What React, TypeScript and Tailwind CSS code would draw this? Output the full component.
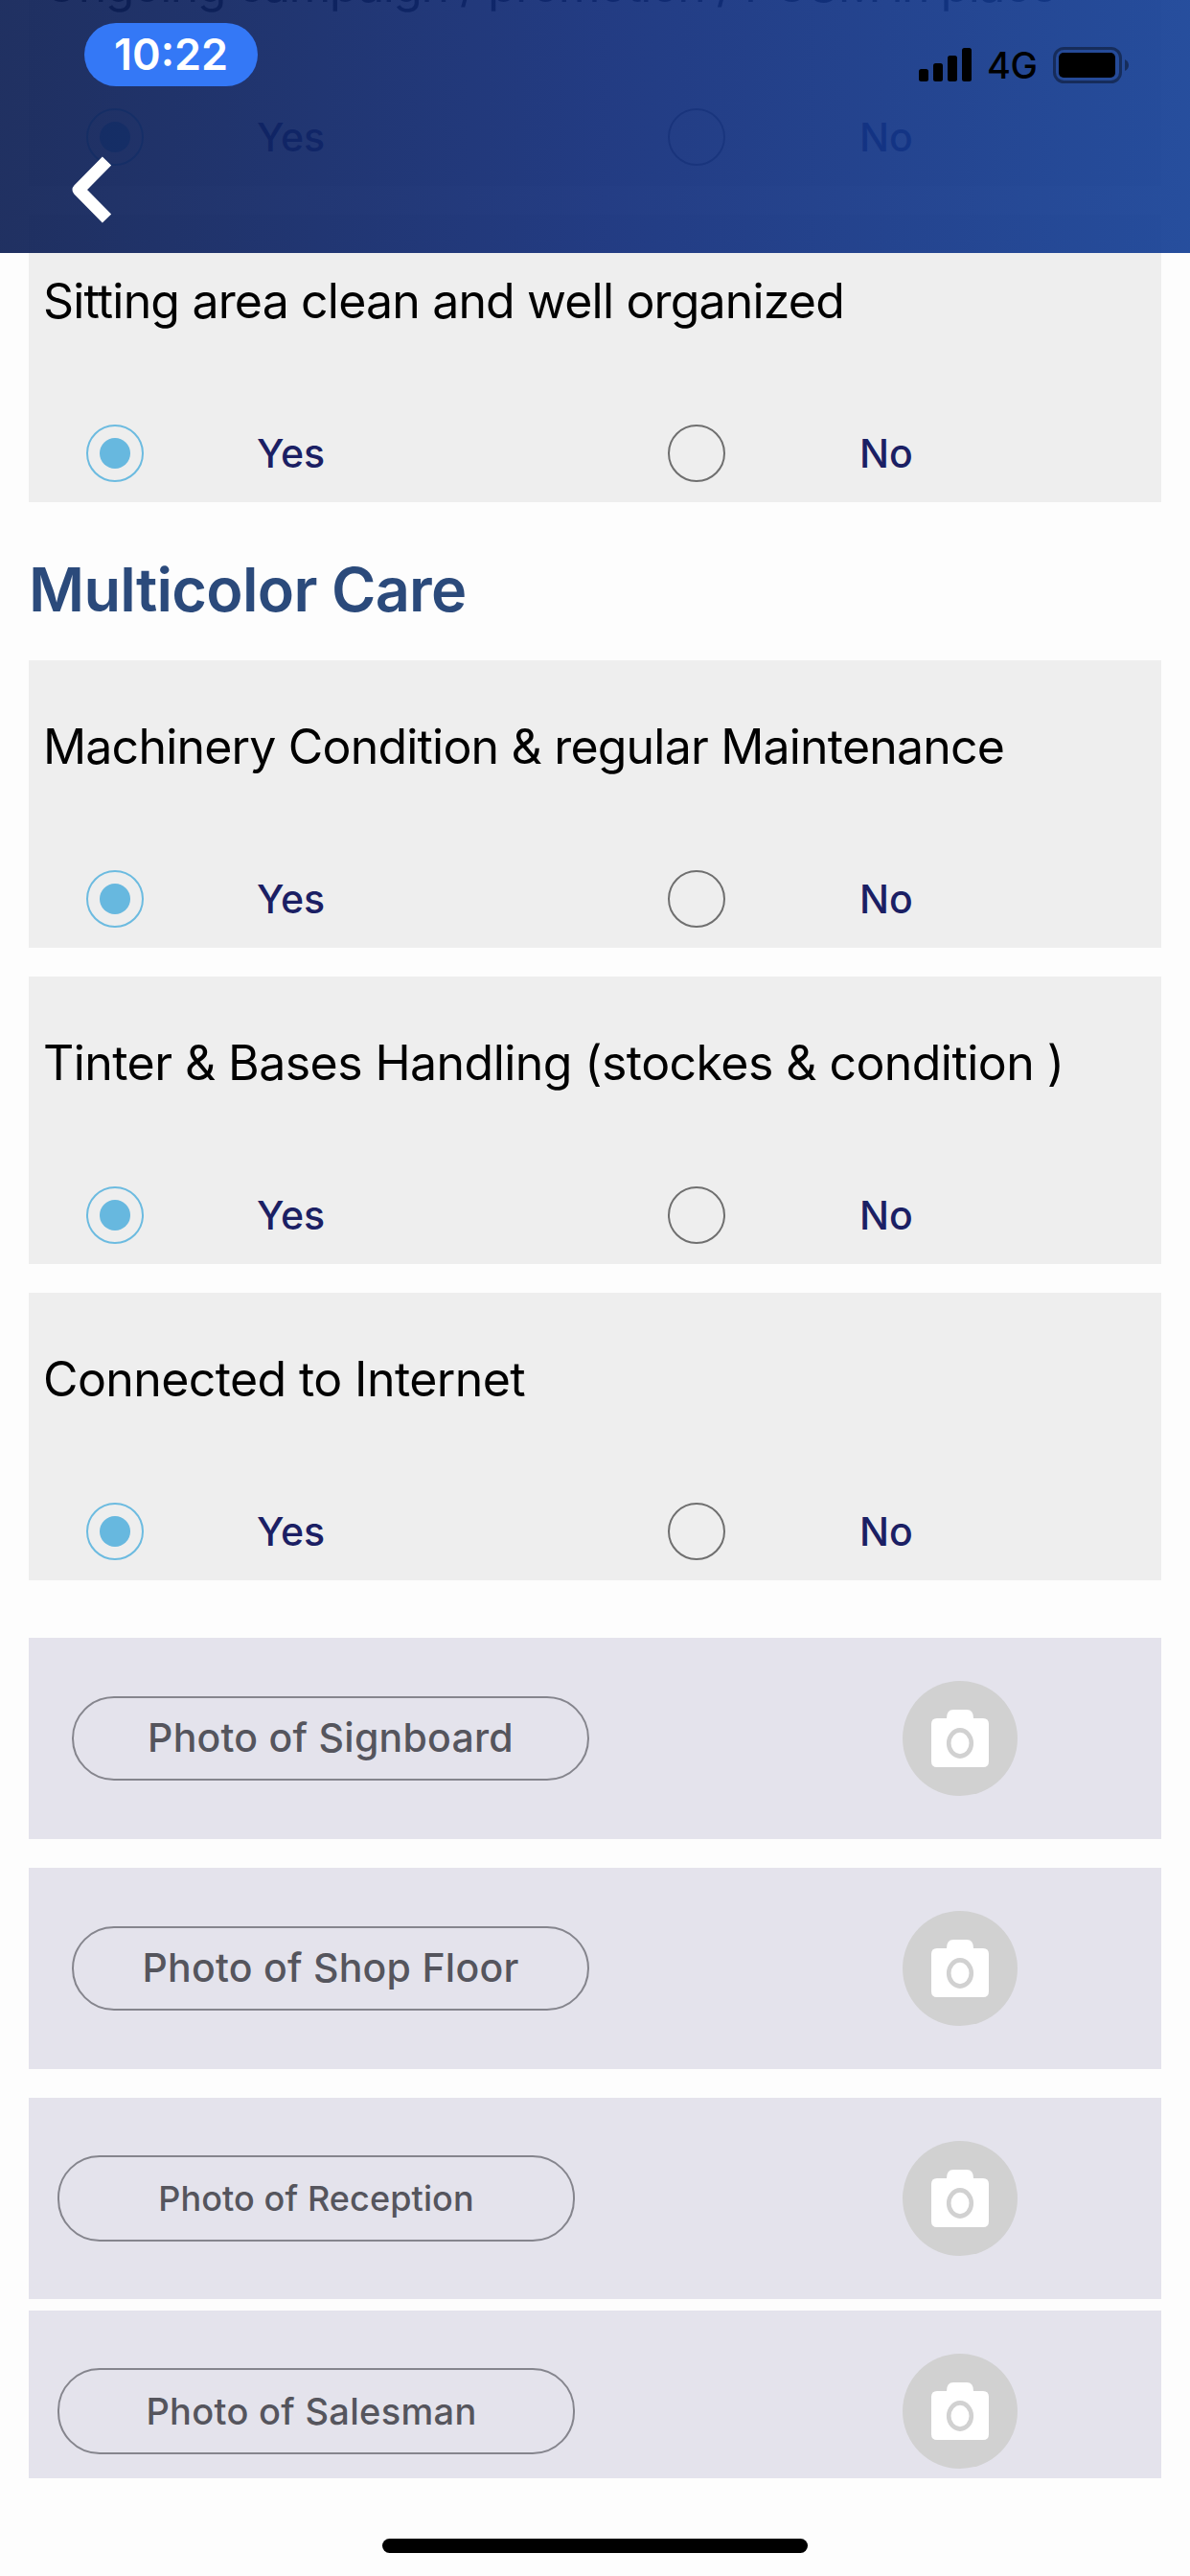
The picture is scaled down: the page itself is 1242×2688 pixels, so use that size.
type Question = { text: string; tracking: string };

const sitting: Question[] = [
  { text: 'Ongoing campaign / promotion / POSM in place', tracking: 'tracking-[-1.55px]' },
  { text: 'Sitting area clean and well organized', tracking: 'tracking-[-0.83px]' },
];

const care: Question[] = [
  { text: 'Machinery Condition & regular Maintenance', tracking: 'tracking-[-0.81px]' },
  { text: 'Tinter & Bases Handling (stockes & condition )', tracking: 'tracking-[-0.56px]' },
  { text: 'Connected to Internet', tracking: 'tracking-[-0.6px]' },
];

function Radio({ checked }: { checked?: boolean }) {
  return checked ? (
    <span className="flex size-[60px] shrink-0 items-center justify-center rounded-full border-2 border-[#6cbbe0]">
      <span className="size-[32px] rounded-full bg-[#67b8df]" />
    </span>
  ) : (
    <span className="size-[60px] shrink-0 rounded-full border-2 border-[#6f6f6f]" />
  );
}

function QuestionCard({ text, tracking }: Question) {
  return (
    <section className="h-[300px] bg-[#eeeeee] pt-[60px]">
      <h3 className={`pl-[15px] text-[50px] leading-[61px] whitespace-nowrap text-black ${tracking}`}>{text}</h3>
      <div className="mt-[98px] flex h-[60px] items-center pl-[60px] text-[41px] leading-[60px] font-[450] text-[#1b1f64]">
        <Radio checked />
        <span className="ml-[118px] w-[429px]">Yes</span>
        <Radio />
        <span className="ml-[140px]">No</span>
      </div>
    </section>
  );
}

function CameraButton() {
  return (
    <svg className="mt-[45px] ml-auto mr-[150px] size-[120px]" viewBox="0 0 120 120">
      <circle cx="60" cy="60" r="60" fill="#d1d1d1" />
      <path
        d="M36 39h10q0-9 7-9h14q7 0 7 9h10q6 0 6 6v39q0 6-6 6H36q-6 0-6-6V45q0-6 6-6z"
        fill="#ffffff"
      />
      <ellipse cx="60" cy="65" rx="11.8" ry="13.6" fill="none" stroke="#d1d1d1" strokeWidth="4.6" />
    </svg>
  );
}

function PhotoCard({ label, card, pill }: { label: string; card: string; pill: string }) {
  return (
    <section className={`flex items-start bg-[#e4e3ec] ${card}`}>
      <div
        className={`flex w-[540px] items-center justify-center rounded-[44px] border-2 border-[#85858d] font-medium whitespace-nowrap text-[#55555d] ${pill}`}
      >
        {label}
      </div>
      <CameraButton />
    </section>
  );
}

function Header() {
  return (
    <header className="absolute inset-x-0 top-0 h-[264px] bg-linear-to-r from-[#0d1f54]/92 via-[#112c79]/92 to-[#143f95]/92">
      <div className="flex h-[90px] items-start justify-between pt-6 pr-[63px] pl-[88px]">
        <div className="flex h-[66px] w-[181px] items-center justify-center rounded-full bg-[#3478f6] text-[45px] font-semibold text-white">
          10:22
        </div>
        <div className="mt-[25px] flex h-[38px] items-center text-black">
          <svg className="h-[38px] w-[56px]" viewBox="0 0 56 38">
            <rect x="0" y="23" width="10" height="13" rx="2.5" />
            <rect x="15" y="17" width="10" height="19" rx="2.5" />
            <rect x="30" y="9" width="10" height="27" rx="2.5" />
            <rect x="45" y="1" width="10" height="35" rx="2.5" />
          </svg>
          <span className="ml-[15px] w-[69px] text-[38px] leading-[38px] font-medium tracking-[-0.5px]">4G</span>
          <svg className="h-[38px] w-[80px]" viewBox="0 0 80 38">
            <rect x="1.5" y="1.5" width="69" height="35" rx="10" fill="none" stroke="#000" strokeOpacity="0.4" strokeWidth="3" />
            <rect x="6" y="6" width="59" height="26" rx="5" />
            <path d="M75 13q4 2 4 6t-4 6z" fillOpacity="0.4" />
          </svg>
        </div>
      </div>
      <svg className="mt-[72px] ml-[73px] h-[72px] w-[48px]" viewBox="0 0 48 72">
        <path d="M38.500 6L9 36l29.500 30" fill="none" stroke="#fff" strokeWidth="13" strokeLinejoin="round" />
      </svg>
    </header>
  );
}

export default function App() {
  return (
    <div className="relative flex h-[2688px] w-[1242px] flex-col overflow-hidden bg-[#fdfdfd] font-['Inter',sans-serif]">
      <main className="-mt-[106px] flex shrink-0 flex-col px-[30px]">
        <div className="flex flex-col gap-[30px]">
          {sitting.map((q) => (
            <QuestionCard key={q.text} {...q} />
          ))}
        </div>
        <h2 className="mt-[51px] h-[80px] text-[63px] leading-[80px] font-semibold tracking-[-0.7px] text-[#2b4a7b]">Multicolor Care</h2>
        <div className="mt-[34px] flex flex-col gap-[30px]">
          {care.map((q) => (
            <QuestionCard key={q.text} {...q} />
          ))}
        </div>
        <div className="mt-[60px] flex flex-col">
          <PhotoCard label="Photo of Signboard" card="h-[210px]" pill="ml-[45px] mt-[61px] h-[88px] text-[41px] tracking-[0.25px]" />
          <PhotoCard label="Photo of Shop Floor" card="mt-[30px] h-[210px]" pill="ml-[45px] mt-[61px] h-[88px] text-[41px] tracking-[0.25px]" />
          <PhotoCard label="Photo of Reception" card="mt-[30px] h-[210px]" pill="ml-[30px] mt-[60px] h-[90px] text-[36px] tracking-[0.1px]" />
          <PhotoCard label="Photo of Salesman" card="mt-[12px] h-[175px]" pill="ml-[30px] mt-[60px] h-[90px] pr-[10px] text-[38px] tracking-[0.3px]" />
        </div>
      </main>
      <Header />
      <div className="mx-auto mt-[63px] h-[15px] w-[444px] shrink-0 rounded-full bg-black" />
    </div>
  );
}
